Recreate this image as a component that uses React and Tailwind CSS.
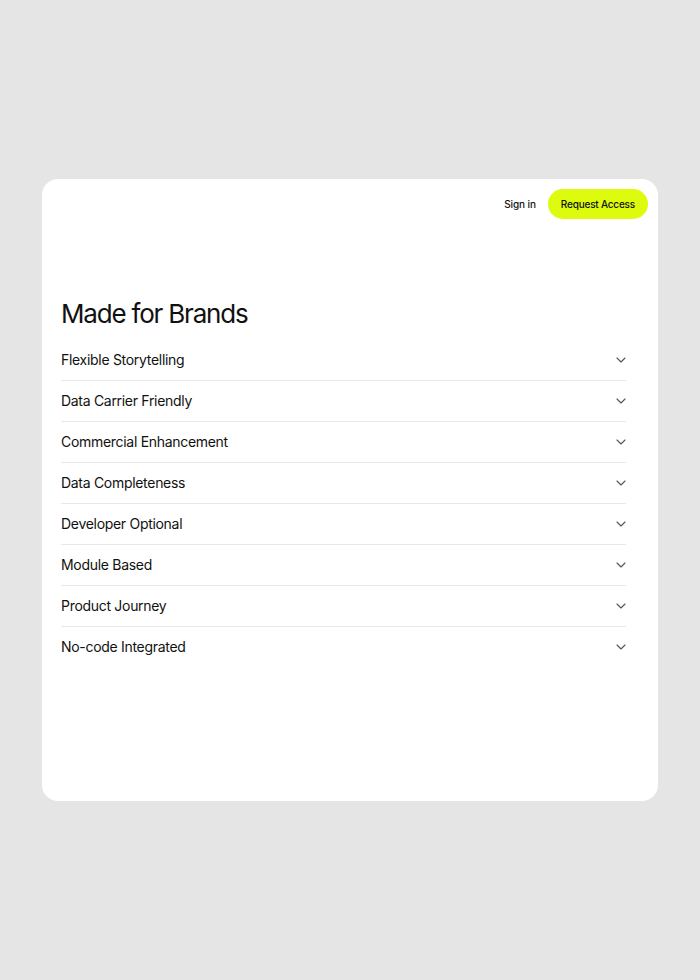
const items = [
  'Flexible Storytelling',
  'Data Carrier Friendly',
  'Commercial Enhancement',
  'Data Completeness',
  'Developer Optional',
  'Module Based',
  'Product Journey',
  'No-code Integrated',
];

const Chevron = () => (
  <svg width="10" height="6" viewBox="0 0 10 6" fill="none" className="shrink-0">
    <path d="M1 1l4 4 4-4" stroke="#555" strokeWidth="1.1" strokeLinecap="round" strokeLinejoin="round" />
  </svg>
);

export default function App() {
  return (
    <div className="min-h-[980px] bg-[#e5e5e5] pt-[179px] px-[42px] font-['Inter',sans-serif] text-[#111]">
      <div className="h-[622px] rounded-[16px] bg-white">
        {/* top bar */}
        <div className="flex items-center justify-end gap-3 p-[10px]">
          <a className="text-[10px] font-medium tracking-[-0.1px]">Sign in</a>
          <button className="h-[30px] rounded-full bg-[#dcfb0d] px-[13px] text-[10px] font-medium tracking-[-0.2px]">
            Request Access
          </button>
        </div>

        <div className="pl-[19px] pr-[32px] pt-[69px]">
          <h2 className="text-[26px] leading-[32px] tracking-[-1.2px]">Made for Brands</h2>
          <ul className="mt-[10px]">
            {items.map((item) => (
              <li
                key={item}
                className="flex h-[41px] items-center justify-between pb-[1px] border-b border-[#e8e8e8] last:border-transparent"
              >
                <span className="text-[14px] tracking-[-0.3px]">{item}</span>
                <Chevron />
              </li>
            ))}
          </ul>
        </div>
      </div>
    </div>
  );
}
